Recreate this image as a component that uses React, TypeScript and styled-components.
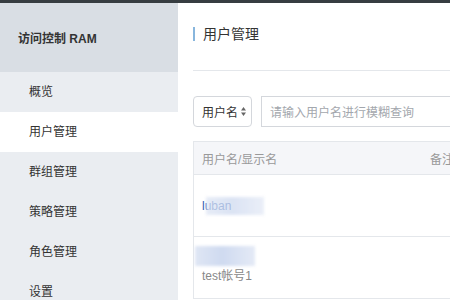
import styled, { createGlobalStyle } from 'styled-components'

const Global = createGlobalStyle`
  html, body {
    margin: 0;
    padding: 0;
    background: #fff;
  }
  body {
    font-family: "Liberation Sans", "Noto Sans CJK SC", sans-serif;
    color: #333;
  }
`

const Page = styled.div`
  width: 450px;
  height: 300px;
  overflow: hidden;
  display: flex;
  flex-direction: column;
`

const TopBar = styled.div`
  height: 3px;
  background: #373d41;
  flex-shrink: 0;
`

const Body = styled.div`
  flex: 1;
  display: flex;
  min-height: 0;
`

const Sidebar = styled.aside`
  width: 178px;
  flex-shrink: 0;
  background: #eaedf1;
  display: flex;
  flex-direction: column;
  overflow: hidden;
`

const SideHeader = styled.div`
  height: 69px;
  flex-shrink: 0;
  background: #d9dee4;
  display: flex;
  align-items: center;
  padding-left: 18px;
  font-size: 12px;
  font-weight: bold;
  color: #333;
`

const MenuItem = styled.div<{ $active?: boolean }>`
  height: 40px;
  flex-shrink: 0;
  display: flex;
  align-items: center;
  padding-left: 29px;
  padding-bottom: 3px;
  box-sizing: border-box;
  font-size: 12px;
  color: #333;
  background: ${(p) => (p.$active ? '#fff' : 'transparent')};
`

const Main = styled.main`
  flex: 1;
  min-width: 0;
  overflow: hidden;
  padding-left: 15px;
`

const TitleBar = styled.div`
  height: 68px;
  box-sizing: border-box;
  padding-top: 24px;
  border-bottom: 1px solid #e4e7eb;
  width: 600px;
`

const Title = styled.h1`
  margin: 0;
  border-left: 2px solid #88b6dd;
  padding-left: 8px;
  font-size: 14px;
  font-weight: normal;
  line-height: 14px;
  color: #333;
`

const Toolbar = styled.div`
  margin-top: 25px;
  display: flex;
  gap: 9px;
  height: 31px;
  width: 600px;
`

const Select = styled.div`
  width: 59px;
  box-sizing: border-box;
  border: 1px solid #d4d7dc;
  border-radius: 4px;
  display: flex;
  align-items: center;
  padding-left: 8px;
  gap: 3px;
  font-size: 12px;
  color: #333;
`

const Arrows = styled.svg`
  width: 5px;
  height: 9px;
`

const SearchInput = styled.div`
  flex: 1;
  box-sizing: border-box;
  border: 1px solid #d4d7dc;
  display: flex;
  align-items: center;
  padding-left: 8px;
  font-size: 12px;
  color: #a3a7ad;
`

const Table = styled.div`
  margin-top: 14px;
  width: 600px;
  border-left: 1px solid #e4e7eb;
  border-top: 1px solid #e4e7eb;
`

const HeadRow = styled.div`
  height: 32px;
  background: #f5f6f9;
  border-bottom: 1px solid #e4e7eb;
  display: grid;
  grid-template-columns: 228px 1fr;
  align-items: center;
  font-size: 12px;
  color: #999;
`

const Row = styled.div`
  height: 61px;
  border-bottom: 1px solid #e4e7eb;
  display: grid;
  grid-template-columns: 228px 1fr;
  align-items: center;
  font-size: 12px;
`

const Cell = styled.div`
  padding-left: 8px;
  position: relative;
`

const Link = styled.span`
  color: #2d5ab0;
`

const Blur = styled.span<{ $w: number; $h: number }>`
  display: block;
  width: ${(p) => p.$w}px;
  height: ${(p) => p.$h}px;
  background: linear-gradient(90deg, #dfe6f4 0%, #cfdaf0 45%, #e4eaf6 100%);
  filter: blur(1.5px);
`

const Cover = styled(Blur)`
  position: absolute;
  left: 12px;
  top: -2px;
  opacity: 0.75;
`

const Stack = styled.div`
  display: flex;
  flex-direction: column;
  margin-top: -6px;
`

const MaskedName = styled(Blur)`
  margin-left: -7px;
`

const Gray = styled.span`
  color: #888;
`

const menu = ['概览', '用户管理', '群组管理', '策略管理', '角色管理', '设置']

export default function App() {
  return (
    <Page>
      <Global />
      <TopBar />
      <Body>
        <Sidebar>
          <SideHeader>访问控制 RAM</SideHeader>
          {menu.map((m) => (
            <MenuItem key={m} $active={m === '用户管理'}>
              {m}
            </MenuItem>
          ))}
        </Sidebar>
        <Main>
          <TitleBar>
            <Title>用户管理</Title>
          </TitleBar>
          <Toolbar>
            <Select>
              用户名
              <Arrows viewBox="0 0 5 9">
                <path d="M2.5 0 L5 3.5 L0 3.5 Z" fill="#666" />
                <path d="M2.5 9 L5 5.5 L0 5.5 Z" fill="#666" />
              </Arrows>
            </Select>
            <SearchInput>请输入用户名进行模糊查询</SearchInput>
          </Toolbar>
          <Table>
            <HeadRow>
              <Cell>用户名/显示名</Cell>
              <Cell>备注</Cell>
            </HeadRow>
            <Row>
              <Cell>
                <Link>luban</Link>
                <Cover $w={58} $h={18} />
              </Cell>
              <Cell />
            </Row>
            <Row>
              <Cell>
                <Stack>
                  <MaskedName $w={60} $h={20} />
                  <Gray>test帐号1</Gray>
                </Stack>
              </Cell>
              <Cell />
            </Row>
          </Table>
        </Main>
      </Body>
    </Page>
  )
}
